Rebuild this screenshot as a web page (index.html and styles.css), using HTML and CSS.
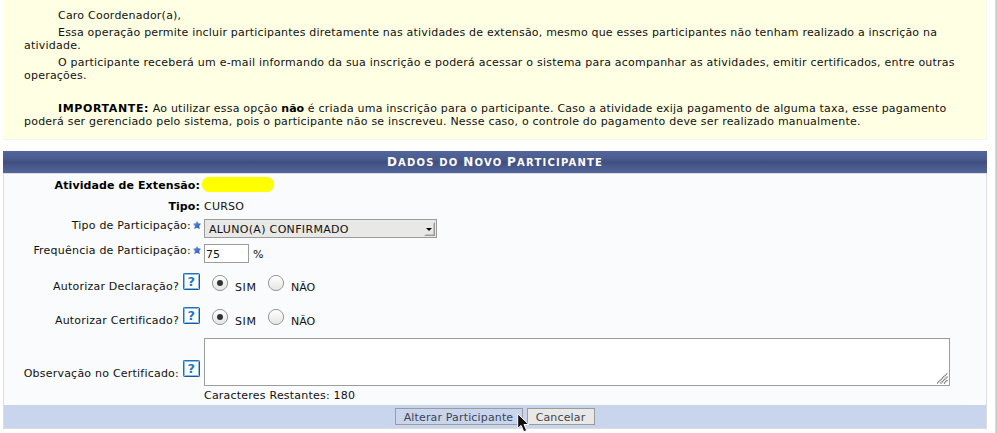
FILE: index.html
```html
<!DOCTYPE html>
<html lang="pt-BR">
<head>
<meta charset="utf-8">
<title>Dados do Novo Participante</title>
<link rel="stylesheet" href="styles.css">
</head>
<body>
<svg class="defs" width="0" height="0">
  <defs>
    <linearGradient id="radioFill" x1="0" y1="0" x2="0" y2="1"><stop offset="0" stop-color="#fff"/><stop offset="1" stop-color="#e4e4e2"/></linearGradient>
    <linearGradient id="starFill" x1="0" y1="0" x2="1" y2="1"><stop offset="0" stop-color="#78aaf4"/><stop offset="1" stop-color="#1742ae"/></linearGradient>
    <symbol id="star" viewBox="0 0 8 8"><path d="M4 0 5.2 2.3 8 2.8 6.1 4.9 6.8 8 4 6.8 1.2 8 1.9 4.9 0 2.8 2.8 2.3Z" fill="url(#starFill)"/></symbol>
    <symbol id="radio" viewBox="0 0 17 17"><circle cx="8" cy="8" r="7.6" fill="url(#radioFill)" stroke="#979795"/></symbol>
  </defs>
</svg>
<div class="page">
  <section class="notice">
    <p>Caro Coordenador(a),</p>
    <p><span class="line-operation">Essa operação permite incluir participantes diretamente nas atividades de extensão, mesmo que esses participantes não tenham realizado a inscrição na</span><br>atividade.</p>
    <p>O participante receberá um e-mail informando da sua inscrição e poderá acessar o sistema para acompanhar as atividades, emitir certificados, entre outras<br>operações.</p>
    <p class="important"><b class="lead">IMPORTANTE:</b> Ao utilizar essa opção <b>não</b> é criada uma inscrição para o participante. Caso a atividade exija pagamento de alguma taxa, esse pagamento<br>poderá ser gerenciado pelo sistema, pois o participante não se inscreveu. Nesse caso, o controle do pagamento deve ser realizado manualmente.</p>
  </section>
  <form class="form">
    <h1 class="caption"><span>Dados</span> <span>do</span> <span>Novo</span> <span>Participante</span></h1>
    <div class="fields">
      <div class="row activity"><div class="label strong">Atividade de Extensão:</div><div class="redacted"></div></div>
      <div class="row type"><div class="label strong">Tipo:</div><div>CURSO</div></div>
      <div class="row participation">
        <div class="label">Tipo de Participação:<svg class="star"><use href="#star"/></svg></div>
        <div class="select">ALUNO(A) CONFIRMADO<svg class="arrow" width="12" height="16" viewBox="0 0 12 16"><path d="M11 1V15H0L2 13.5H9.5V2.5Z" fill="#9b9b98"/><path d="M2 7H8L5 10Z" fill="#000"/></svg></div>
      </div>
      <div class="row frequency">
        <div class="label">Frequência de Participação:<svg class="star"><use href="#star"/></svg></div>
        <input class="number" value="75" aria-label="Frequência"><span class="percent">%</span>
      </div>
      <div class="row declaration">
        <div class="label">Autorizar Declaração?<span class="help">?</span></div>
        <div class="choices">
          <svg class="radio"><use href="#radio"/><circle cx="8" cy="8" r="3" fill="#2e3436"/></svg><span class="yes">SIM</span>
          <svg class="radio"><use href="#radio"/></svg><span>NÃO</span>
        </div>
      </div>
      <div class="row certificate">
        <div class="label">Autorizar Certificado?<span class="help">?</span></div>
        <div class="choices">
          <svg class="radio"><use href="#radio"/><circle cx="8" cy="8" r="3" fill="#2e3436"/></svg><span class="yes">SIM</span>
          <svg class="radio"><use href="#radio"/></svg><span>NÃO</span>
        </div>
      </div>
      <div class="row remarks">
        <div class="label">Observação no Certificado:<span class="help">?</span></div>
        <div class="remarks-field">
          <div class="box"><textarea aria-label="Observação"></textarea><svg class="grip" width="11" height="11" viewBox="0 0 11 11"><path d="M0 10.5 10.5 0M3.5 10.5 10.5 3.5M7 10.5 10.5 7" stroke="#777" stroke-width="1.4" stroke-dasharray="1.3 .5" fill="none"/></svg></div>
          <div class="counter">Caracteres Restantes: 180</div>
        </div>
      </div>
    </div>
    <div class="actions">
      <button type="button" class="submit">Alterar Participante<svg class="cursor" width="13" height="20" viewBox="0 0 13 20"><path d="M.7.8V15.5L4.1 12.4 6.8 18.7 9.7 17.5 7 11.5H11.8Z" fill="#111" stroke="#fff"/></svg></button>
      <button type="button" class="cancel">Cancelar</button>
    </div>
  </form>
</div>
<div class="edge"></div>
</body>
</html>
```
FILE: styles.css
```css
* { box-sizing: border-box; }
body {
  margin: 0;
  height: 433px;
  overflow: hidden;
  display: flex;
  justify-content: space-between;
  background: #fff;
  color: #111;
  font: 11px/13px "DejaVu Sans", sans-serif;
  letter-spacing: .22px;
}
.defs { position: absolute; }
.page { width: 984px; margin-left: 3px; }
.edge { width: 3px; background: linear-gradient(90deg, #e2e2e2, #c8c8c8 50%, #dedede); }
.notice {
  height: 140px;
  padding: 9px 0 0 21px;
  background: #ffffe4;
  border-right: 1px solid #f7f7fa;
  border-bottom: 1px solid #f4f4fa;
  white-space: nowrap;
}
.notice p { margin: 0 0 4px; text-indent: 34px; }
.notice .line-operation { letter-spacing: .195px; }
.notice .important { margin-top: 20px; letter-spacing: .21px; }
.notice b { color: #000; letter-spacing: 0; }
.notice .lead { letter-spacing: .62px; }
.form { margin-top: 11px; }
.caption {
  margin: 0;
  height: 22px;
  text-align: center;
  color: #fff;
  background: linear-gradient(#53659a, #4b5c90 35%, #404e80 50%, #46568a 65%, #53659a);
  font-size: 10px;
  line-height: 23px;
  text-transform: uppercase;
  letter-spacing: 1.2px;
}
.caption span { display: inline-block; }
.caption span::first-letter { font-size: 12px; }
.caption span:nth-child(2)::first-letter { font-size: 10px; }
.fields {
  height: 232px;
  border: solid #dcdce4;
  border-width: 1px 1px 0;
  background: #fafbfd;
}
.row { display: flex; align-items: flex-start; }
.label {
  width: 200px;
  padding-right: 4px;
  display: flex;
  justify-content: flex-end;
  white-space: nowrap;
}
.strong { font-weight: bold; color: #000; letter-spacing: .1px; }
.activity { height: 26px; padding-top: 5px; }
.redacted { width: 72px; height: 15px; margin: -2px 0 0 -2px; border-radius: 8px; background: #ff0; box-shadow: 0 0 1px #ff0; }
.type { height: 19px; }
.participation { height: 25px; }
.frequency { height: 29px; }
.participation .label, .frequency .label { padding-right: 3px; }
.star { width: 8px; height: 8px; margin: 2px 0 0 2px; }
.select {
  width: 233px;
  height: 19px;
  padding: 3px 0 0 4px;
  position: relative;
  border: 1px solid #9c9c9a;
  background: #e8e8e6;
  letter-spacing: .33px;
}
.arrow { position: absolute; right: 0; top: 1px; }
.number {
  width: 45px;
  height: 19px;
  margin: 0;
  padding: 2px 1px 0;
  border: 1px solid #9c9c9a;
  background: #fff;
  color: #111;
  font: inherit;
}
.percent { margin: 4px 0 0 4px; }
.declaration, .certificate { height: 34px; }
.declaration .label, .certificate .label { padding-top: 7px; }
.help {
  width: 17px;
  height: 17px;
  margin: -7px 0 0 4px;
  border: 1px solid #2070bd;
  border-right-color: #155995;
  border-bottom-color: #155995;
  border-radius: 2px;
  box-shadow: inset 0 0 0 1px #8cbce8;
  background: #fff;
  color: #2376cb;
  font: bold 13px/15px "DejaVu Sans", sans-serif;
  text-align: center;
}
.choices { display: flex; padding-left: 8px; }
.radio { width: 17px; height: 17px; margin-top: 2px; overflow: visible; }
.choices span { margin: 8px 0 0 6px; letter-spacing: 0; }
.choices .yes { width: 23px; margin-right: 10px; letter-spacing: .6px; }
.remarks { margin-top: -3px; }
.remarks .label { padding-top: 29px; }
.box { position: relative; width: 746px; height: 48px; }
textarea { display: block; width: 100%; height: 100%; border: 1px solid #9c9c9a; background: #fff; resize: none; }
.grip { position: absolute; right: 2px; bottom: 2px; }
.counter { margin-top: 3px; }
.actions {
  height: 24px;
  padding: 3px 1px 0 0;
  display: flex;
  justify-content: center;
  gap: 4px;
  border: solid #dcdce4;
  border-width: 0 1px 1px;
  background: #c8d5ec;
}
button {
  height: 17px;
  padding: 1px 0 0;
  position: relative;
  border: 1px solid #9c9c9a;
  background: #e8e8e6;
  color: #3c4454;
  font: inherit;
  letter-spacing: .15px;
}
.submit { width: 128px; background: #c8d5ec; }
.cancel { width: 68px; }
.cursor { position: absolute; left: 121px; top: 4px; z-index: 1; }
```
